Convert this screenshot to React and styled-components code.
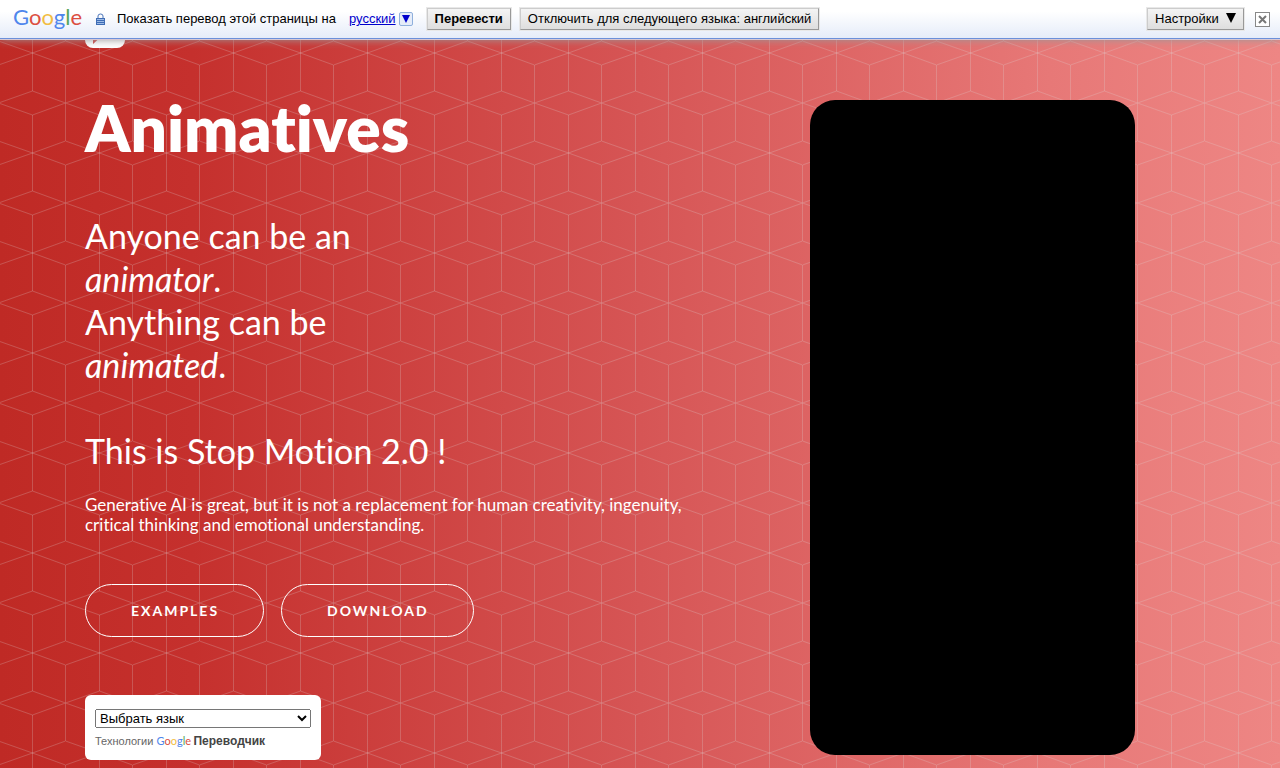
import React from "react"
import styled, { createGlobalStyle } from "styled-components"

export default function App() {
  return (
    <>
      <GlobalStyle />
      <TranslateBar>
        <GoogleLogo />
        <LockIcon />
        <BarText>Показать перевод этой страницы на</BarText>
        <LanguageLink href="#">русский</LanguageLink>
        <LanguageToggle type="button" aria-label="Выбрать язык">
          <Arrow size={8} color="#0000cc" />
        </LanguageToggle>
        <BarButton type="button" bold>
          Перевести
        </BarButton>
        <BarButton type="button">
          Отключить для следующего языка: английский
        </BarButton>
        <Spacer />
        <BarButton type="button">
          Настройки&nbsp; <Arrow size={10} color="#000" />
        </BarButton>
        <CloseButton type="button" aria-label="Закрыть">
          <svg width="9" height="9" viewBox="0 0 9 9">
            <path d="M1 1L8 8M8 1L1 8" stroke="#777" strokeWidth="2" />
          </svg>
        </CloseButton>
      </TranslateBar>
      <Hero>
        <CubePattern />
        <Container>
          <AppIcon>
            <svg width="40" height="40" viewBox="0 0 40 40">
              <path d="M8 5L30 16L8 36Z" fill="#d0403f" />
            </svg>
          </AppIcon>
          <Columns>
            <Intro>
              <Title>Animatives</Title>
              <Tagline>
                Anyone can be an
                <br />
                <em>animator</em>.
                <br />
                Anything can be
                <br />
                <em>animated</em>.
                <br />
                <br />
                This is Stop Motion 2.0 !
              </Tagline>
              <Lead>
                Generative AI is great, but it is not a replacement for human
                creativity, ingenuity, critical thinking and emotional
                understanding.
              </Lead>
              <Actions>
                <OutlineLink href="#examples">Examples</OutlineLink>
                <OutlineLink href="#download">Download</OutlineLink>
              </Actions>
              <TranslateWidget>
                <LanguageSelect aria-label="Выбрать язык">
                  <option>Выбрать язык</option>
                </LanguageSelect>
                <PoweredBy>
                  Технологии <GoogleLogo small />
                  <WidgetLink href="#">Переводчик</WidgetLink>
                </PoweredBy>
              </TranslateWidget>
            </Intro>
            <Device />
          </Columns>
        </Container>
      </Hero>
    </>
  )
}

const logoLetters = [
  ["G", "#4f86ec"],
  ["o", "#dc4e41"],
  ["o", "#f2bd42"],
  ["g", "#4f86ec"],
  ["l", "#58a55c"],
  ["e", "#dc4e41"],
]

const GoogleLogo = ({ small }) => (
  <Logo $small={small}>
    {logoLetters.map(([letter, color], i) => (
      <LogoLetter key={i} $color={color}>
        {letter}
      </LogoLetter>
    ))}
  </Logo>
)

const LockIcon = () => (
  <Lock width="9" height="12" viewBox="0 0 9 12">
    <path d="M2 5V3Q2 1 4.500 1Q7 1 7 3V5" fill="none" stroke="#4a74b8" />
    <path d="M0 5H9V12H0Z" fill="#3f6db5" />
    <path d="M1 6.500H8M1 8.500H8M1 10.500H8" stroke="#9dbbe6" />
  </Lock>
)

const Arrow = ({ size, color }) => (
  <svg width={size} height={size} viewBox="0 0 10 10" aria-hidden="true">
    <path d="M0 0H10L5 10Z" fill={color} />
  </svg>
)

const BarButton = ({ bold, ...props }) => <Raised $bold={bold} {...props} />

const CubePattern = () => (
  <PatternLayer aria-hidden="true">
    <defs>
      <pattern
        id="cubes"
        x="-2"
        y="-36"
        width="67"
        height="100"
        patternUnits="userSpaceOnUse"
      >
        <g fill="none" stroke="#ddd" strokeOpacity="0.23">
          <path d="M-33 12L.5 0L34.500 12L67.500 0" />
          <path d="M-33 88L.5 100L34.500 88L67.500 100" />
          <path d="M.5 38L34.500 50L67.500 38M.5 62L34.500 50L67.500 62" />
          <path d="M34.500 12V88M.5 0V38M.5 62V100" />
        </g>
      </pattern>
    </defs>
    <rect width="100%" height="100%" fill="url(#cubes)" />
  </PatternLayer>
)

const GlobalStyle = createGlobalStyle`
  * {
    box-sizing: border-box;
  }

  body {
    margin: 0;
    font-family: Lato, sans-serif;
    font-variant-ligatures: none;
  }
`

const TranslateBar = styled.header`
  position: relative;
  z-index: 1;
  display: flex;
  align-items: center;
  height: 39px;
  padding: 0 10px 0 13px;
  border-bottom: 1px solid #6b90da;
  background: linear-gradient(#fff 30%, #e5ecf9);
  box-shadow: 0 1px 0 #d8c8d4, 0 1px 8px #999;
  font: 13px/16px "Liberation Sans", Arial, sans-serif;
  white-space: nowrap;
`

const Logo = styled.span`
  display: inline-block;
  width: ${p => (p.$small ? "34px" : "68px")};
  margin: ${p => (p.$small ? "0 3px 0 0" : "0 15px 4px 0")};
  font: ${p => (p.$small ? "11px/14px" : "22px/28px")} Lato, sans-serif;
`
const LogoLetter = styled.span`
  color: ${p => p.$color};
`

const Lock = styled.svg`
  margin-right: 12px;
`

const BarText = styled.span`
  margin-right: 13px;
`

const LanguageLink = styled.a`
  margin-right: 3px;
  color: #0000cc;
`

const LanguageToggle = styled.button`
  display: flex;
  align-items: center;
  justify-content: center;
  width: 14px;
  height: 14px;
  margin-right: 14px;
  padding: 0;
  border: 1px solid #8fb0dc;
  border-radius: 2px;
  background: #e5ecf9;
`

const Raised = styled.button`
  height: 22px;
  margin-right: 9px;
  padding: 0 7px;
  border: 1px solid #ccc;
  border-right-color: #999;
  border-bottom-color: #999;
  background: linear-gradient(#f4f4f4, #dedede);
  box-shadow: 0 0 0 1px #e8e8e8;
  color: #000;
  font: 13px/16px "Liberation Sans", Arial, sans-serif;
  font-weight: ${p => (p.$bold ? 700 : 400)};
`

const Spacer = styled.div`
  flex: 1;
`

const CloseButton = styled.button`
  display: flex;
  align-items: center;
  justify-content: center;
  width: 15px;
  height: 15px;
  margin-left: 2px;
  padding: 0;
  border: 1px solid #888;
  background: #fff;
`

const Hero = styled.main`
  position: relative;
  min-height: calc(100vh - 39px);
  overflow: hidden;
  background: linear-gradient(
    90deg,
    #bf2a25,
    #c5302d 15%,
    #d65555 50%,
    #e77877 82%,
    #ee8684
  );
  color: #fff;
`

const PatternLayer = styled.svg`
  position: absolute;
  inset: 0;
  width: 100%;
  height: 100%;
`

const Container = styled.div`
  position: relative;
  max-width: 1140px;
  margin: 0 auto;
  padding: 0 15px;
`

const AppIcon = styled.div`
  width: 40px;
  height: 40px;
  margin-top: -31px;
  border-radius: 8px;
  background: #fff;
`

const Columns = styled.div`
  display: flex;
  justify-content: space-between;
  padding: 52px 60px 8px 0;
`

const Intro = styled.div`
  flex: 0 1 620px;
`

const Title = styled.h1`
  margin: 0 0 58px;
  font-size: 64px;
  font-weight: 800;
  line-height: 56px;
`

const Tagline = styled.h2`
  margin: 0 0 23px;
  font-size: 34px;
  font-weight: 400;
  line-height: 43px;
`

const Lead = styled.p`
  margin: 0 0 49px;
  font-size: 17px;
  line-height: 20px;
`

const Actions = styled.div`
  display: flex;
  gap: 17px;
  margin-bottom: 58px;
`

const OutlineLink = styled.a`
  padding: 15px 44px 15px 45px;
  border: 1px solid #fff;
  border-radius: 300px;
  color: #fff;
  font-size: 14px;
  font-weight: 700;
  line-height: 21px;
  letter-spacing: 2px;
  text-decoration: none;
  text-transform: uppercase;
`

const TranslateWidget = styled.div`
  width: 236px;
  padding: 14px 10px 10px;
  border-radius: 6px;
  background: #fff;
`

const LanguageSelect = styled.select`
  display: block;
  width: 100%;
  height: 19px;
  margin-bottom: 4px;
  color: #000;
  font: 13px "Liberation Sans", Arial, sans-serif;
`

const PoweredBy = styled.div`
  color: #666;
  font: 11px/18px "Liberation Sans", Arial, sans-serif;
  white-space: nowrap;
`

const WidgetLink = styled.a`
  color: #444;
  font-size: 12px;
  font-weight: 700;
  text-decoration: none;
`

const Device = styled.div`
  flex: 0 0 325px;
  align-self: flex-start;
  aspect-ratio: 325 / 655;
  border-radius: 25px;
  background: #000;
`
